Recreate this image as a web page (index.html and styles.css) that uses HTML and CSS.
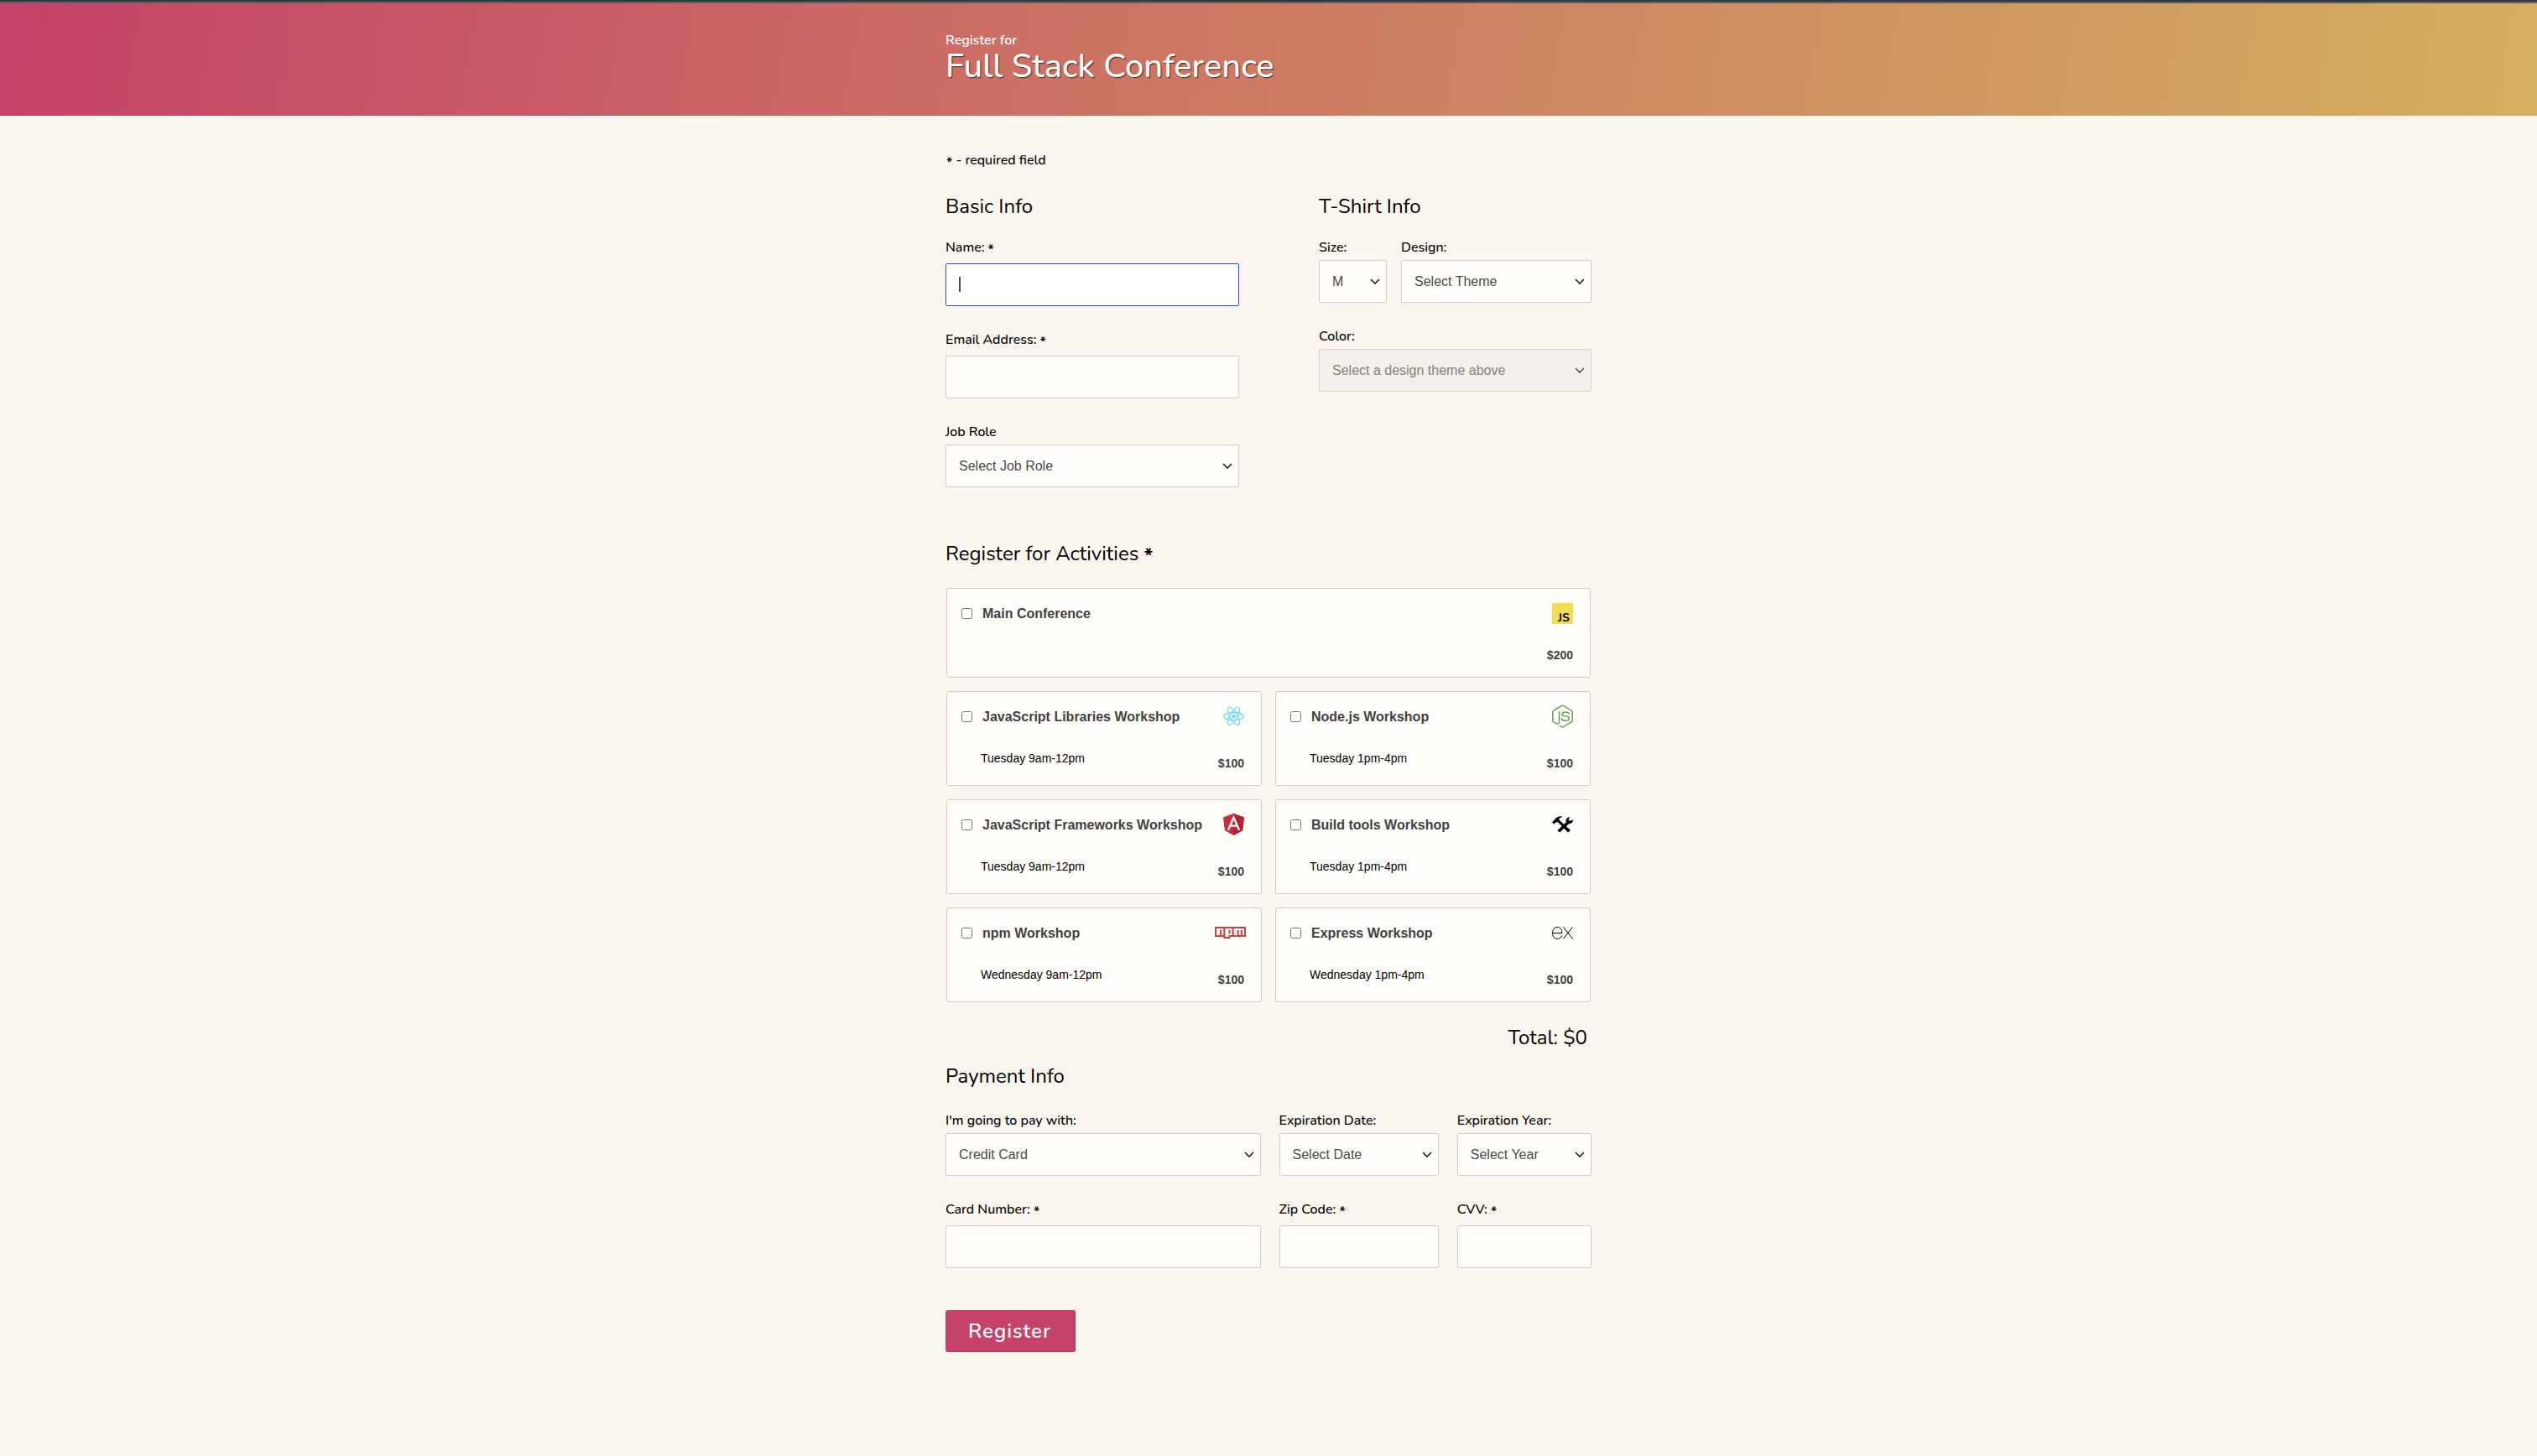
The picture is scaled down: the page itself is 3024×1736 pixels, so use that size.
FILE: index.html
```html
<!DOCTYPE html>
<html lang="en">
<head>
  <meta charset="utf-8">
  <meta name="viewport" content="width=device-width, initial-scale=1">
  <title>Full Stack Conference</title>
  <link rel="stylesheet" href="styles.css">
</head>
<body>
  <header class="banner">
    <div class="container">
      <p class="banner-lead">Register for</p>
      <h1 class="banner-title">Full Stack Conference</h1>
    </div>
  </header>

  <main class="container">
    <form class="form">
      <p class="note"><span class="star">*</span> - required field</p>

      <div class="info">
        <fieldset class="group basic">
          <legend>Basic Info</legend>
          <div class="fields">
            <div class="field">
              <label for="name">Name: <span class="star">*</span></label>
              <div class="control focused">
                <input type="text" id="name" autocomplete="off">
                <span class="caret"></span>
              </div>
            </div>
            <div class="field">
              <label for="email">Email Address: <span class="star">*</span></label>
              <input type="email" id="email">
            </div>
            <div class="field">
              <label for="role">Job Role</label>
              <select id="role"><option>Select Job Role</option></select>
            </div>
          </div>
        </fieldset>

        <fieldset class="group shirt">
          <legend>T-Shirt Info</legend>
          <div class="fields shirt-fields">
            <div class="field">
              <label for="size">Size:</label>
              <select id="size"><option>M</option></select>
            </div>
            <div class="field">
              <label for="design">Design:</label>
              <select id="design"><option>Select Theme</option></select>
            </div>
            <div class="field wide">
              <label for="color">Color:</label>
              <select id="color" disabled><option>Select a design theme above</option></select>
            </div>
          </div>
        </fieldset>
      </div>

      <fieldset class="group activities">
        <legend>Register for Activities <span class="star">*</span></legend>
        <div class="cards">
          <label class="card main">
            <span class="card-row card-head">
              <input type="checkbox"><span class="card-title">Main Conference</span>
              <svg class="icon" width="25" height="25" viewBox="0 0 25 25"><path fill="#f1dd4f" d="M0 0h25v25H0z"/><text class="js-mark" x="7" y="22">JS</text></svg>
            </span>
            <span class="card-row card-foot"><span class="price">$200</span></span>
          </label>

          <label class="card">
            <span class="card-row card-head">
              <input type="checkbox"><span class="card-title">JavaScript Libraries Workshop</span>
              <svg class="icon" width="25" height="22" viewBox="0 0 25 22" fill="none" stroke="#61dafb" stroke-width="1.200"><circle cx="12.5" cy="11" r="2.2" fill="#61dafb" stroke="none"/><ellipse cx="12.5" cy="11" rx="11.900" ry="4.5"/><ellipse cx="12.5" cy="11" rx="11.900" ry="4.5" transform="rotate(60 12.5 11)"/><ellipse cx="12.5" cy="11" rx="11.900" ry="4.5" transform="rotate(120 12.5 11)"/></svg>
            </span>
            <span class="card-row card-foot"><span class="time">Tuesday 9am-12pm</span><span class="price">$100</span></span>
          </label>

          <label class="card">
            <span class="card-row card-head">
              <input type="checkbox"><span class="card-title">Node.js Workshop</span>
              <svg class="icon" width="25" height="28" viewBox="0 0 25 28" fill="none" stroke="#6a9f60" stroke-width="1.5" stroke-linejoin="round"><path d="M8.6 8.3v11.8c0 2.5-1.4 3.6-3.5 2.5L1.6 20.7Q.8 20.2.8 19.2V8.8q0-1 .8-1.5L11.5 1.4q1-.6 2 0l9.900 5.900q.8.5.8 1.500v10.400q0 1-.8 1.500l-9.900 5.900q-1 .6-2 0l-2.500-1.500"/><path d="M20.100 11.800c-.2-2-1.600-2.700-4.200-2.700-2.500 0-3.900.9-3.900 2.500 0 1.900 1.800 2.200 4.200 2.400 2.900.3 4.300.9 4.300 2.600 0 2-1.600 2.700-4.500 2.700-3 0-4.600-.9-4.700-3.200"/></svg>
            </span>
            <span class="card-row card-foot"><span class="time">Tuesday 1pm-4pm</span><span class="price">$100</span></span>
          </label>

          <label class="card">
            <span class="card-row card-head">
              <input type="checkbox"><span class="card-title">JavaScript Frameworks Workshop</span>
              <svg class="icon" width="25" height="26" viewBox="0 0 25 26"><path fill="#cc2b38" d="M12.500 0 25 4.400l-1.900 15.800-10.600 5.800-10.600-5.800L0 4.400z"/><path fill="#b42333" d="M12.500 0 25 4.400l-1.900 15.800-10.600 5.800z"/><path fill="none" stroke="#fff" stroke-width="2.300" d="M5.900 19.800 12.500 4.700l6.600 15.100M8.800 14.700h7.400"/></svg>
            </span>
            <span class="card-row card-foot"><span class="time">Tuesday 9am-12pm</span><span class="price">$100</span></span>
          </label>

          <label class="card">
            <span class="card-row card-head">
              <input type="checkbox"><span class="card-title">Build tools Workshop</span>
              <svg class="icon" width="25" height="20" viewBox="0 0 25 20"><path d="M0 7.600 4.200 3C6 .9 8.300 0 11.400.3l.5 1.300C9.700 1.700 8.600 2.500 8.200 4l1.100 1.600 12.600 11.200-2.700 3L7.300 7.600l-2-.7-3.200 2.600z"/><path d="M6.200 17.300 16.800 7.200c-1-2.700.8-5.700 4-6l.7.300-2 2.600 1.800 1.900 3.400-1.700c.7 2.700-1.500 5-4.600 4.900L9.100 19.600z"/></svg>
            </span>
            <span class="card-row card-foot"><span class="time">Tuesday 1pm-4pm</span><span class="price">$100</span></span>
          </label>

          <label class="card">
            <span class="card-row card-head">
              <input type="checkbox"><span class="card-title">npm Workshop</span>
              <svg class="icon icon-npm" width="37" height="14" viewBox="0 0 18 7" preserveAspectRatio="none"><path fill="#c34540" d="M0 0h18v6H9v1H5V6H0z"/><path fill="#fffefa" d="M1 1h4v4H4V2H3v3H1zM6 1h4v4H8v1H6zM11 1h6v4h-1V2h-1v3h-1V2h-1v3h-2z"/><path fill="#c34540" d="M8 2h1v2H8z"/></svg>
            </span>
            <span class="card-row card-foot"><span class="time">Wednesday 9am-12pm</span><span class="price">$100</span></span>
          </label>

          <label class="card">
            <span class="card-row card-head">
              <input type="checkbox"><span class="card-title">Express Workshop</span>
              <svg class="icon" width="25" height="15" viewBox="0 0 25 15" fill="none" stroke="#000"><path d="M.6 7.500h11.200C11.800 3 9.700.5 6.300.5 2.900.5.600 3.100.600 7.400c0 4.400 2.100 7 5.700 7 2.900 0 4.800-1.500 5.400-4.100M13.600.500l11 14M24.300.500l-11 14"/></svg>
            </span>
            <span class="card-row card-foot"><span class="time">Wednesday 1pm-4pm</span><span class="price">$100</span></span>
          </label>
        </div>
        <p class="total">Total: $0</p>
      </fieldset>

      <fieldset class="group payment">
        <legend>Payment Info</legend>
        <div class="payment-fields">
          <div class="field">
            <label for="method">I'm going to pay with:</label>
            <select id="method"><option>Credit Card</option></select>
          </div>
          <div class="field">
            <label for="month">Expiration Date:</label>
            <select id="month"><option>Select Date</option></select>
          </div>
          <div class="field">
            <label for="year">Expiration Year:</label>
            <select id="year"><option>Select Year</option></select>
          </div>
          <div class="field">
            <label for="card">Card Number: <span class="star">*</span></label>
            <input type="text" id="card">
          </div>
          <div class="field">
            <label for="zip">Zip Code: <span class="star">*</span></label>
            <input type="text" id="zip">
          </div>
          <div class="field">
            <label for="cvv">CVV: <span class="star">*</span></label>
            <input type="text" id="cvv">
          </div>
        </div>
      </fieldset>

      <button class="submit" type="submit">Register</button>
    </form>
  </main>
</body>
</html>
```

FILE: styles.css
```css
*,
*::before,
*::after {
  box-sizing: border-box;
}

body {
  margin: 0;
  background: #faf5ee;
  color: #000;
  font: 500 16px/21px Nunito, Lato, "Open Sans", sans-serif;
}

p,
h1 {
  margin: 0;
}

.container {
  max-width: 770px;
  margin: 0 auto;
}

.banner {
  padding: 36px 0 38px;
  border-top: 2px solid #36373b;
  background: linear-gradient(100deg, #c54268, #cc7264 42%, #d3b05f);
  box-shadow: inset 0 2px #626367;
  color: #fff;
}

.banner-lead {
  font-weight: 600;
}

.banner-title {
  font-size: 40px;
  font-weight: 500;
  line-height: 41px;
  text-shadow: 1px 1px 1px rgba(0, 0, 0, 0.7);
}

.form {
  padding: 43px 0 120px;
}

.star {
  font-weight: 700;
  vertical-align: -3px;
  line-height: 1;
}

.note {
  margin-bottom: 29px;
  padding-left: 1px;
}

.info {
  display: grid;
  grid-template-columns: 350fr 325fr;
  column-gap: 95px;
  align-items: start;
  margin-bottom: 64px;
}

.group {
  min-width: 0;
  margin: 0;
  padding: 0;
  border: 0;
}

legend {
  margin-bottom: 24px;
  padding: 0;
  font-size: 24px;
  font-weight: 400;
  line-height: 30px;
}

.activities legend {
  margin-bottom: 26px;
}

.payment legend {
  margin-bottom: 28px;
}

.fields {
  display: grid;
  row-gap: 30px;
}

.shirt-fields {
  grid-template-columns: 81fr 227fr;
  column-gap: 17px;
}

.wide {
  grid-column: 1 / -1;
}

.payment-fields {
  display: grid;
  grid-template-columns: 375fr 190fr 160fr;
  gap: 30px 22px;
}

.field label {
  display: block;
}

.field input,
.field select {
  display: block;
  width: 100%;
  height: 51px;
  margin: 8px 0 0;
  padding: 0 15px;
  border: 1px solid #d1cec7;
  border-radius: 2px;
  outline: 0;
  background: #fffefa;
  color: #4a4a4a;
  font: 16px "Liberation Sans", Arial, sans-serif;
}

.field select {
  margin-top: 4px;
  appearance: none;
  background: #fffefa url("data:image/svg+xml,%3Csvg xmlns='http://www.w3.org/2000/svg' width='12' height='8' fill='none' stroke='%23222' stroke-width='1.6'%3E%3Cpath d='M1 1l5 5 5-5'/%3E%3C/svg%3E") no-repeat right 7px center;
}

.field select:disabled {
  border-color: #d6d2cc;
  background-color: #f4efea;
  background-image: url("data:image/svg+xml,%3Csvg xmlns='http://www.w3.org/2000/svg' width='12' height='8' fill='none' stroke='%23555' stroke-width='1.6'%3E%3Cpath d='M1 1l5 5 5-5'/%3E%3C/svg%3E");
  color: #85827d;
  opacity: 1;
}

.control {
  position: relative;
}

.focused input {
  border-color: #2449dc;
  background: #fff;
}

.caret {
  position: absolute;
  top: 16px;
  left: 16px;
  width: 2px;
  height: 18px;
  background: #4a4a4a;
}

.cards {
  display: grid;
  grid-template-columns: 1fr 1fr;
  gap: 16px;
  padding: 0 1px;
}

.card {
  display: flex;
  flex-direction: column;
  gap: 26px;
  padding: 15px 20px 16px 17px;
  border: 1px solid #d1cec7;
  border-radius: 3px;
  background: #fffefa;
  font-family: "Liberation Sans", Arial, sans-serif;
}

.main {
  grid-column: 1 / -1;
}

.card-row {
  display: flex;
}

.card-head {
  height: 28px;
  align-items: center;
}

.card-head input {
  width: 13px;
  height: 13px;
  margin: 0 12px 0 0;
}

.card-title {
  color: #414141;
  font-weight: 700;
}

.icon {
  display: block;
  overflow: visible;
  margin-left: auto;
}

.icon-npm {
  margin-right: -2px;
}

.js-mark {
  font: 700 14px Nunito, Lato, sans-serif;
}

.card-foot {
  align-items: flex-end;
  font-size: 14px;
  line-height: 20px;
}

.time {
  padding: 0 0 6px 23px;
  font-weight: 400;
}

.price {
  margin-left: auto;
  color: #414141;
  font-weight: 700;
}

.total {
  padding: 27px 5px 16px 0;
  font-size: 24px;
  font-weight: 400;
  line-height: 30px;
  text-align: right;
}

.submit {
  display: block;
  width: 155px;
  height: 50px;
  margin-top: 50px;
  padding: 0 2px 0 0;
  border: 0;
  border-radius: 3px;
  background: #c54268;
  box-shadow: inset -1px -1px #a83a5b;
  color: #fff;
  font: 600 24px/50px Nunito, Lato, "Open Sans", sans-serif;
  letter-spacing: 1px;
}
```
